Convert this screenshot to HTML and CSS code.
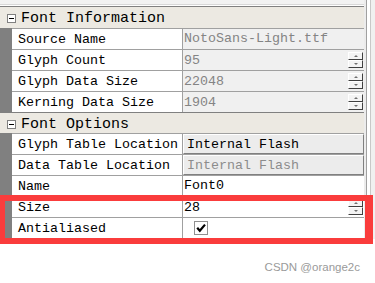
FILE: index.html
```html
<!DOCTYPE html>
<html>
<head>
<meta charset="utf-8">
<link rel="stylesheet" href="styles.css">
</head>
<body>
<div class="frame">
  <div class="grid">
    <div class="topstrip"></div>
    <div class="cat cat-first"><span class="toggle"></span><span class="cat-text">Font Information</span></div>
    <div class="row">
      <div class="gutter"></div>
      <div class="name">Source Name</div>
      <div class="val ro">NotoSans-Light.ttf</div>
    </div>
    <div class="row">
      <div class="gutter"></div>
      <div class="name">Glyph Count</div>
      <div class="val ro"><span>95</span><span class="spin"><i class="up"></i><i class="down"></i></span></div>
    </div>
    <div class="row">
      <div class="gutter"></div>
      <div class="name">Glyph Data Size</div>
      <div class="val ro"><span>22048</span><span class="spin"><i class="up"></i><i class="down"></i></span></div>
    </div>
    <div class="row">
      <div class="gutter"></div>
      <div class="name">Kerning Data Size</div>
      <div class="val ro"><span>1904</span><span class="spin"><i class="up"></i><i class="down"></i></span></div>
    </div>
    <div class="cat"><span class="toggle"></span><span class="cat-text">Font Options</span></div>
    <div class="row">
      <div class="gutter"></div>
      <div class="name">Glyph Table Location</div>
      <div class="val"><span class="btn">Internal Flash</span></div>
    </div>
    <div class="row">
      <div class="gutter"></div>
      <div class="name">Data Table Location</div>
      <div class="val"><span class="btn btn-dis">Internal Flash</span></div>
    </div>
    <div class="row">
      <div class="gutter"></div>
      <div class="name">Name</div>
      <div class="val">Font0</div>
    </div>
    <div class="row">
      <div class="gutter"></div>
      <div class="name">Size</div>
      <div class="val"><span>28</span><span class="spin"><i class="up"></i><i class="down"></i></span></div>
    </div>
    <div class="row row-last">
      <div class="gutter"></div>
      <div class="name">Antialiased</div>
      <div class="val"><svg class="check" width="14" height="14" viewBox="0 0 14 14"><rect x="0.5" y="0.5" width="13" height="13" fill="#fff" stroke="#909090"/><path d="M3.2 6.8 L5.8 9.8 L11 3.6" fill="none" stroke="#000" stroke-width="2.2"/></svg></div>
    </div>
  </div>
  <div class="edge"></div>
</div>
<div class="mark">CSDN @orange2c</div>
<div class="highlight"></div>
</body>
</html>
```
FILE: styles.css
```css
* { box-sizing: border-box; }
html, body { margin: 0; padding: 0; background: #fff; }
body {
  width: 375px;
  height: 283px;
  overflow: hidden;
  position: relative;
  font-family: "Liberation Mono", "DejaVu Sans Mono", monospace;
  font-size: 13.33px;
  color: #000;
}
.frame { display: flex; align-items: stretch; }
.grid { width: 364px; display: flex; flex-direction: column; }
.edge {
  flex: 1;
  background: linear-gradient(to right, #ececec 0 2px, #a0a0a0 2px 3px, #fff 3px 6px, #c8c8c8 6px 7px, #f0f0f0 7px);
}
.topstrip {
  height: 6px;
  background: linear-gradient(#f2f2f2 0 4px, #d8d8d8 4px 5px, #fff 5px);
}
.cat {
  display: flex;
  align-items: center;
  height: 21px;
  background: #ece9e2;
  border-top: 1px solid #808080;
  font-size: 15px;
  white-space: nowrap;
}
.cat-first { height: 22px; }
.cat-text { line-height: 20px; padding-top: 3px; }
.toggle {
  width: 9px;
  height: 9px;
  margin-left: 7px;
  margin-right: 5px;
  margin-top: 2px;
  border: 1px solid #808080;
  background: #fff;
  display: flex;
  align-items: center;
  justify-content: center;
}
.toggle::after {
  content: "";
  width: 5px;
  height: 1px;
  background: #000;
}
.row {
  display: grid;
  grid-template-columns: 12px 171px 1fr;
  height: 21px;
}
.row-last { height: 22px; }
.gutter { background: #808080; }
.name {
  border-top: 1px solid #a0a0a0;
  border-right: 1px solid #a0a0a0;
  background: #fff;
  padding-left: 6px;
  line-height: 22px;
  white-space: nowrap;
  overflow: hidden;
}
.row-last .name, .row-last .val { border-bottom: 1px solid #a0a0a0; }
.val {
  border-top: 1px solid #a0a0a0;
  background: #fff;
  display: flex;
  align-items: center;
  padding-left: 1px;
  padding-right: 1px;
  line-height: 22px;
  white-space: nowrap;
  overflow: hidden;
}
.val > span:first-child { padding-top: 1px; }
.val.ro { background: #f0f0f0; color: #848484; }
.spin {
  margin-left: auto;
  width: 15px;
  height: 16px;
  display: flex;
  flex-direction: column;
}
.val > .spin { padding-top: 0; }
.spin i {
  flex: 1;
  display: flex;
  align-items: center;
  justify-content: center;
  background: #f4f4f4;
  border-top: 1px solid #fff;
  border-left: 1px solid #fff;
  border-bottom: 1px solid #404040;
  border-right: 1px solid #404040;
}
.spin i::after {
  content: "";
  border-left: 2px solid transparent;
  border-right: 2px solid transparent;
}
.spin .up::after { border-bottom: 2px solid #707070; }
.spin .down::after { border-top: 2px solid #707070; }
.val > .btn {
  flex: 1;
  height: 20px;
  margin-left: -1px;
  margin-right: -1px;
  background: #ececec;
  border-top: 1px solid #fff;
  border-left: 1px solid #fff;
  border-bottom: 1px solid #808080;
  border-right: 1px solid #808080;
  padding-left: 3px;
  padding-top: 1px;
  line-height: 18px;
  color: #000;
}
.val > .btn-dis { color: #8c8c8c; }
.check { margin-left: 10px; display: block; }
.mark {
  padding-top: 22px;
  padding-right: 15px;
  text-align: right;
  font-family: "Liberation Sans", Arial, sans-serif;
  font-size: 11.5px;
  line-height: 13px;
  color: #9a9a9a;
}
.highlight {
  position: absolute;
  left: -1px;
  top: 195px;
  width: 374px;
  height: 49px;
  border-style: solid;
  border-color: #fa3c3c;
  border-width: 6px 8px 6px 6px;
}
```
